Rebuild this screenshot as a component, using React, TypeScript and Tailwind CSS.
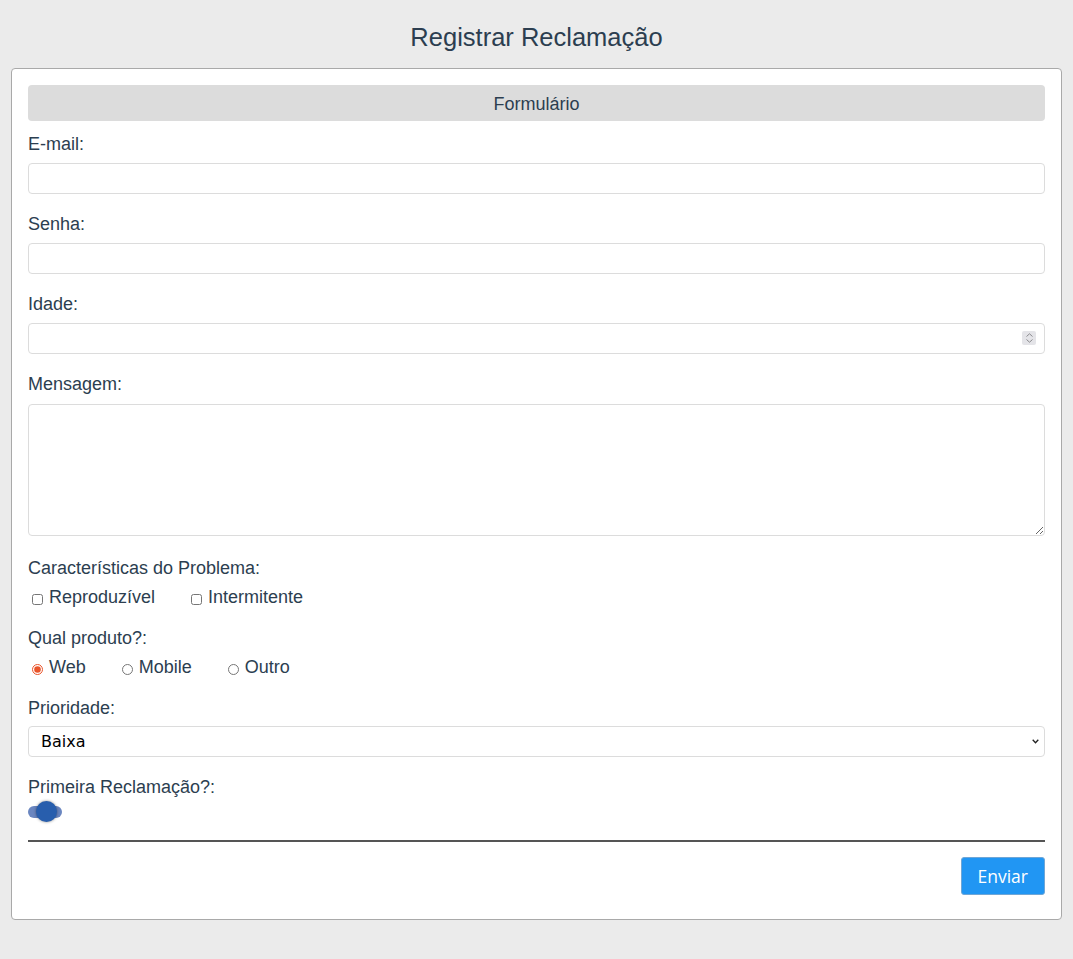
import { useState } from 'react';

const font = { fontFamily: '"Liberation Sans", Arial, sans-serif' };

function Field({ label, children, className = 'mb-5', gap = 'mb-2' }: { label: string; children: React.ReactNode; className?: string; gap?: string }) {
  return (
    <div className={className}>
      <label className={`block text-[18px] leading-[21px] text-[#2c3e50] ${gap}`}>{label}</label>
      {children}
    </div>
  );
}

export default function App() {
  const [produto, setProduto] = useState('web');
  const [primeira, setPrimeira] = useState(true);

  const inputClass =
    'block w-full h-[31px] border border-[#dcdcdc] rounded-[4px] bg-white px-3 text-[16px] outline-none';

  return (
    <div className="min-h-[959px] bg-[#ebebeb] pt-[21px] pb-[39px]" style={font}>
      <h1 className="text-center text-[25.5px] leading-[32px] text-[#2c3e50] mb-[15px]">
        Registrar Reclamação
      </h1>

      <div className="mx-[11px] bg-white border border-[#a9a9a9] rounded-[4px] p-4 pb-[24px]">
        <div className="h-9 pt-[2px] rounded-[4px] bg-[#dcdcdc] flex items-center justify-center text-[18px] text-[#2c3e50]">
          Formulário
        </div>

        <form className="mt-[13px]" onSubmit={(e) => e.preventDefault()}>
          <Field label="E-mail:">
            <input type="email" className={inputClass} />
          </Field>

          <Field label="Senha:">
            <input type="password" className={inputClass} />
          </Field>

          <Field label="Idade:">
            <div className="relative">
              <input type="number" className={inputClass} />
              {/* spinner, always shown as in the reference */}
              <span className="pointer-events-none absolute right-[9px] top-[8px] w-[14px] h-[14px] rounded-[2px] bg-[#e4e4e8] flex flex-col items-center justify-center gap-[2px]">
                <svg width="7" height="4" viewBox="0 0 7 4">
                  <path d="M0.5 3.5 L3.5 0.8 L6.5 3.5" fill="none" stroke="#8a8a8e" strokeWidth="1" />
                </svg>
                <svg width="7" height="4" viewBox="0 0 7 4">
                  <path d="M0.5 0.5 L3.5 3.2 L6.5 0.5" fill="none" stroke="#8a8a8e" strokeWidth="1" />
                </svg>
              </span>
            </div>
          </Field>

          <Field label="Mensagem:" className="mb-[22px]" gap="mb-[9px]">
            <textarea className="block w-full h-[132px] border border-[#dcdcdc] rounded-[4px] bg-white px-3 py-2 text-[16px] outline-none" />
          </Field>

          <Field label="Características do Problema:">
            <div className="flex items-center text-[18px] leading-[21px] text-[#2c3e50]">
              <label className="flex items-center mr-[32px]">
                <input type="checkbox" className="m-0 ml-1 mr-[6px] w-[11px] h-[11px] mt-[3px]" />
                Reproduzível
              </label>
              <label className="flex items-center">
                <input type="checkbox" className="m-0 ml-1 mr-[6px] w-[11px] h-[11px] mt-[3px]" />
                Intermitente
              </label>
            </div>
          </Field>

          <Field label="Qual produto?:">
            <div className="flex items-center text-[18px] leading-[21px] text-[#2c3e50]">
              {[
                ['web', 'Web'],
                ['mobile', 'Mobile'],
                ['outro', 'Outro'],
              ].map(([value, text]) => (
                <label key={value} className="flex items-center mr-[32px]">
                  <input
                    type="radio"
                    name="produto"
                    value={value}
                    checked={produto === value}
                    onChange={() => setProduto(value)}
                    className="m-0 ml-1 mr-[6px] w-[11px] h-[11px] mt-[3px] accent-[#e9552b]"
                  />
                  {text}
                </label>
              ))}
            </div>
          </Field>

          <Field label="Prioridade:" gap="mb-[7px]">
            <div className="relative">
              <select
                className="block w-full h-[31px] appearance-none border border-[#dcdcdc] rounded-[4px] bg-white pl-3 pr-6 text-[16px] text-black outline-none"
                style={{ fontFamily: '"DejaVu Sans", sans-serif' }}
                defaultValue="baixa"
              >
                <option value="baixa">Baixa</option>
                <option value="media">Média</option>
                <option value="alta">Alta</option>
              </select>
              <svg
                className="pointer-events-none absolute right-[6px] top-[13px]"
                width="7"
                height="5"
                viewBox="0 0 7 5"
              >
                <path d="M0.7 0.8 L3.5 3.8 L6.3 0.8" fill="none" stroke="#222" strokeWidth="1.3" />
              </svg>
            </div>
          </Field>

          <div>
            <label className="block text-[18px] leading-[21px] text-[#2c3e50]">Primeira Reclamação?:</label>
            <button
              type="button"
              onClick={() => setPrimeira(!primeira)}
              className="relative block mt-[3px] w-[34px] h-[21px]"
            >
              <span className="absolute left-0 top-[5px] w-[34px] h-[12px] rounded-full bg-[#6a86c0] blur-[0.6px]" />
              <span
                className={`absolute top-0 w-[21px] h-[21px] rounded-full bg-[#285ead] shadow-[0_0_3px_rgba(0,0,0,0.45)] ${
                  primeira ? 'left-[8px]' : 'left-0'
                }`}
              />
            </button>
          </div>

          <div className="mt-[18px] border-t-2 border-[#555]" />

          <div className="flex justify-end mt-[15px]">
            <button
              type="submit"
              className="h-[38px] px-4 bg-[#2196f3] border border-[#6fa6d6] rounded-[3px] text-white text-[17.5px]"
              style={{ fontFamily: '"Open Sans", sans-serif' }}
            >
              Enviar
            </button>
          </div>
        </form>
      </div>
    </div>
  );
}
